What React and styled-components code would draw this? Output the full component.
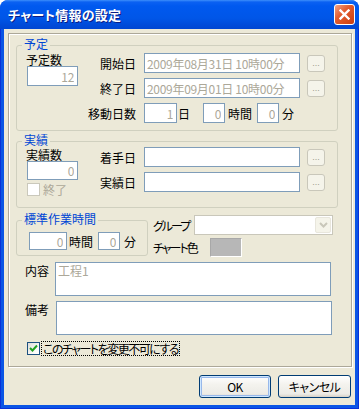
import React from "react";
import styled, { createGlobalStyle } from "styled-components";

const GlobalStyle = createGlobalStyle`
  html, body {
    margin: 0;
    padding: 0;
    background: #ffffff;
  }
  body {
    font-family: "Noto Sans CJK JP", "Noto Sans", sans-serif;
    font-size: 12px;
    font-feature-settings: "palt";
    color: #000;
  }
`;

const Window = styled.div`
  width: 359px;
  height: 409px;
  display: flex;
  flex-direction: column;
  border-radius: 8px 8px 0 0;
  overflow: hidden;
  background: #0a55e5;
`;

const TitleBar = styled.div`
  height: 29px;
  flex: none;
  display: flex;
  align-items: center;
  justify-content: space-between;
  padding: 0 4px 0 8px;
  box-sizing: border-box;
  background: linear-gradient(
    180deg,
    #3d8ffb 0px,
    #0b61f2 2px,
    #0059ef 6px,
    #0056e8 18px,
    #004bd9 25px,
    #0046d2 29px
  );
`;

const Title = styled.span`
  color: #fff;
  font-weight: bold;
  font-size: 13px;
  line-height: 14px;
  letter-spacing: 0.2px;
  text-shadow: 1px 1px 0 #0a1d86;
`;

const CloseButton = styled.div`
  width: 21px;
  height: 21px;
  box-sizing: border-box;
  border: 1px solid #fff;
  border-radius: 3px;
  background: linear-gradient(135deg, #f2a487 0%, #e35d30 40%, #d44a1c 75%, #c63e14 100%);
  display: flex;
  align-items: center;
  justify-content: center;
`;

const Frame = styled.div`
  flex: 1;
  display: flex;
  padding: 0 4px 4px;
  box-shadow: inset 1px 0 #0831d9, inset -1px 0 #0831d9, inset 0 -1px #0831d9;
`;

const Client = styled.div`
  flex: 1;
  background: #ece9d8;
  display: flex;
  flex-direction: column;
  padding: 4px 0 0 4px;
`;

const Panel = styled.div`
  width: 344px;
  height: 334px;
  box-sizing: border-box;
  border: 1px solid #aca899;
  box-shadow: inset 1px 1px 0 #fff, 1px 1px 0 #fff;
  padding: 11px 0 0 7px;
  display: flex;
  flex-direction: column;
`;

const Group = styled.div`
  position: relative;
  box-sizing: border-box;
  width: ${(p) => p.$w}px;
  height: ${(p) => p.$h}px;
  margin-top: ${(p) => p.$mt || 0}px;
  border: 1px solid #d0d0bf;
  border-radius: 3px;
  padding: ${(p) => p.$pad};
`;

const Legend = styled.span`
  position: absolute;
  top: -9px;
  left: 5px;
  padding: 0 2px;
  background: #ece9d8;
  color: #0046d5;
  line-height: 13px;
  white-space: nowrap;
`;

const FormGrid = styled.div`
  display: grid;
  grid-template-columns: 62px 48px auto;
  grid-template-rows: repeat(${(p) => p.$rows}, 20px);
  row-gap: 5px;
`;

const LeftCol = styled.div`
  grid-column: 1;
  grid-row: 1 / span ${(p) => p.$span};
  display: flex;
  flex-direction: column;
  align-items: flex-start;
  margin-top: ${(p) => p.$mt || 0}px;
`;

const Label = styled.span`
  line-height: 13px;
  white-space: nowrap;
  letter-spacing: ${(p) => p.$ls || 0}px;
  color: ${(p) => (p.$disabled ? "#aca899" : "#000")};
`;

const RowLabel = styled(Label)`
  grid-column: 2;
  align-self: center;
  text-align: right;
`;

const FieldRow = styled.div`
  grid-column: 3;
  display: flex;
  align-items: center;
  padding-left: 8px;
`;

const TextBox = styled.input`
  box-sizing: border-box;
  width: ${(p) => p.$w}px;
  height: ${(p) => p.$h || 20}px;
  margin: 0 0 0 ${(p) => p.$ml || 0}px;
  padding: 0 ${(p) => (p.$right ? 3 : 1)}px 0 ${(p) => (p.$right ? 1 : 2)}px;
  border: 1px solid #7f9db9;
  background: #fff;
  color: #aca899;
  font: inherit;
  font-size: 12px;
  letter-spacing: -0.3px;
  text-align: ${(p) => (p.$right ? "right" : "left")};
  outline: none;
`;

const Unit = styled.span`
  margin-left: ${(p) => p.$ml || 0}px;
  line-height: 13px;
  white-space: nowrap;
`;

const DotButton = styled.div`
  width: 18px;
  height: 17px;
  margin-left: 7px;
  box-sizing: border-box;
  border: 1px solid #c9c7ba;
  border-radius: 3px;
  background: #f5f4ea;
  color: #a09d8f;
  font-family: "Liberation Sans", sans-serif;
  font-size: 9px;
  line-height: 9px;
  display: flex;
  justify-content: center;
  align-items: flex-end;
  padding-bottom: 3px;
`;

const CheckRow = styled.div`
  display: flex;
  align-items: center;
  margin: ${(p) => p.$mt || 0}px 0 0 ${(p) => p.$ml || 0}px;
`;

const CheckBox = styled.div`
  width: 13px;
  height: 13px;
  box-sizing: border-box;
  border: 1px solid ${(p) => (p.$disabled ? "#cac8bb" : "#1c5180")};
  background: ${(p) =>
    p.$disabled ? "#fff" : "linear-gradient(135deg, #dcdcd7 0%, #fbfbf9 70%, #fff 100%)"};
  display: flex;
  align-items: center;
  justify-content: center;
`;

const CheckText = styled.span`
  margin-left: 1px;
  line-height: 13px;
  padding: 0 1px;
  white-space: nowrap;
  letter-spacing: ${(p) => p.$ls || 0}px;
  color: ${(p) => (p.$disabled ? "#aca899" : "#000")};
  border: 1px ${(p) => (p.$focus ? "dotted #000" : "solid transparent")};
`;

const BottomRow = styled.div`
  display: flex;
  margin-top: ${(p) => p.$mt}px;
`;

const SideCol = styled.div`
  display: flex;
  flex-direction: column;
  margin-left: 5px;
`;

const SideRow = styled.div`
  display: flex;
  align-items: center;
  margin-top: ${(p) => p.$mt || 0}px;
`;

const SideLabel = styled(Label)`
  width: ${(p) => p.$w}px;
`;

const Select = styled.div`
  width: 139px;
  height: 20px;
  box-sizing: border-box;
  border: 1px solid #c9c7ba;
  background: #fff;
  display: flex;
  justify-content: flex-end;
  padding: 1px;
`;

const SelectArrow = styled.div`
  width: 16px;
  height: 16px;
  box-sizing: border-box;
  border: 1px solid #e8e6dc;
  border-radius: 2px;
  background: #f5f4ea;
  display: flex;
  align-items: center;
  justify-content: center;
`;

const Swatch = styled.div`
  width: 32px;
  height: 19px;
  box-sizing: border-box;
  background: #b7b7b7;
  border: 1px solid;
  border-color: #a8a8a8 #fff #fff #a8a8a8;
`;

const MemoRow = styled.div`
  display: flex;
  align-items: flex-start;
  margin-top: ${(p) => p.$mt}px;
  padding-left: 9px;
`;

const MemoLabel = styled(Label)`
  width: ${(p) => p.$w}px;
  margin-top: 2px;
`;

const MemoBox = styled.textarea`
  box-sizing: border-box;
  width: 276px;
  height: 34px;
  margin: 0;
  padding: 1px 2px;
  border: 1px solid #7f9db9;
  background: #fff;
  color: #aca899;
  font: inherit;
  font-size: 12px;
  line-height: 14px;
  resize: none;
  overflow: hidden;
  outline: none;
`;

const ButtonRow = styled.div`
  display: flex;
  justify-content: flex-end;
  gap: 7px;
  padding-right: 4px;
  margin-top: 8px;
`;

const Button = styled.button`
  width: ${(p) => p.$w}px;
  height: 23px;
  box-sizing: border-box;
  margin: 0;
  padding: 0;
  border: 1px solid #003c74;
  border-radius: 3px;
  background: linear-gradient(180deg, #ffffff 0%, #f4f3ee 40%, #ecebe6 85%, #d6d0c5 100%);
  box-shadow: ${(p) =>
    p.$default ? "inset 0 0 0 1px #cee7ff, inset 0 0 0 2px #98b8ea" : "none"};
  font: inherit;
  font-size: 12px;
  letter-spacing: -0.5px;
  color: #000;
`;

const Check = () => (
  <svg width="9" height="9" viewBox="0 0 9 9">
    <path d="M1 4 L3.5 6.5 L8 1.5" fill="none" stroke="#21a121" strokeWidth="2" />
  </svg>
);

export default function App() {
  return (
    <>
      <GlobalStyle />
      <Window>
        <TitleBar>
          <Title>チャート情報の設定</Title>
          <CloseButton>
            <svg width="11" height="11" viewBox="0 0 11 11">
              <path d="M1.5 1.5 L9.5 9.5 M9.5 1.5 L1.5 9.5" stroke="#fff" strokeWidth="2.4" strokeLinecap="square" />
            </svg>
          </CloseButton>
        </TitleBar>
        <Frame>
          <Client>
            <Panel>
              <Group $w={322} $h={86} $pad="7px 0 0 9px">
                <Legend>予定</Legend>
                <FormGrid $rows={3}>
                  <LeftCol $span={3}>
                    <Label>予定数</Label>
                    <TextBox $w={51} $ml={1} $right readOnly value="12" />
                  </LeftCol>
                  <RowLabel>開始日</RowLabel>
                  <FieldRow>
                    <TextBox $w={156} readOnly value="2009年08月31日 10時00分" />
                    <DotButton>...</DotButton>
                  </FieldRow>
                  <RowLabel>終了日</RowLabel>
                  <FieldRow>
                    <TextBox $w={156} readOnly value="2009年09月01日 10時00分" />
                    <DotButton>...</DotButton>
                  </FieldRow>
                  <RowLabel>移動日数</RowLabel>
                  <FieldRow>
                    <TextBox $w={33} $right readOnly value="1" />
                    <Unit $ml={1}>日</Unit>
                    <TextBox $w={22} $ml={13} $right readOnly value="0" />
                    <Unit $ml={3}>時間</Unit>
                    <TextBox $w={22} $ml={5} $right readOnly value="0" />
                    <Unit $ml={3}>分</Unit>
                  </FieldRow>
                </FormGrid>
              </Group>

              <Group $w={322} $h={67} $mt={10} $pad="5px 0 0 9px">
                <Legend>実績</Legend>
                <FormGrid $rows={2}>
                  <LeftCol $span={2} $mt={1}>
                    <Label>実績数</Label>
                    <TextBox $w={51} $ml={1} $right readOnly value="0" />
                    <CheckRow $mt={2} $ml={1}>
                      <CheckBox $disabled />
                      <CheckText $disabled>終了</CheckText>
                    </CheckRow>
                  </LeftCol>
                  <RowLabel>着手日</RowLabel>
                  <FieldRow>
                    <TextBox $w={156} readOnly value="" />
                    <DotButton>...</DotButton>
                  </FieldRow>
                  <RowLabel>実績日</RowLabel>
                  <FieldRow>
                    <TextBox $w={156} readOnly value="" />
                    <DotButton>...</DotButton>
                  </FieldRow>
                </FormGrid>
              </Group>

              <BottomRow $mt={7}>
                <Group $w={132} $h={36} $mt={5} $pad="11px 0 0 12px">
                  <Legend>標準作業時間</Legend>
                  <CheckRow>
                    <TextBox $w={38} $h={18} $right readOnly value="0" />
                    <Unit $ml={2}>時間</Unit>
                    <TextBox $w={22} $h={18} $ml={5} $right readOnly value="0" />
                    <Unit $ml={4}>分</Unit>
                  </CheckRow>
                </Group>
                <SideCol>
                  <SideRow>
                    <SideLabel $w={41} $ls={-2}>グループ</SideLabel>
                    <Select>
                      <SelectArrow>
                        <svg width="9" height="6" viewBox="0 0 9 6">
                          <path d="M1 1 L4.5 4.5 L8 1" fill="none" stroke="#c9c7ba" strokeWidth="2" />
                        </svg>
                      </SelectArrow>
                    </Select>
                  </SideRow>
                  <SideRow $mt={3}>
                    <SideLabel $w={57} $ls={-2}>チャート色</SideLabel>
                    <Swatch />
                  </SideRow>
                </SideCol>
              </BottomRow>

              <MemoRow $mt={5}>
                <MemoLabel $w={30}>内容</MemoLabel>
                <MemoBox readOnly value="工程1" />
              </MemoRow>
              <MemoRow $mt={5}>
                <MemoLabel $w={31}>備考</MemoLabel>
                <MemoBox readOnly value="" />
              </MemoRow>

              <CheckRow $mt={6} $ml={11}>
                <CheckBox>
                  <Check />
                </CheckBox>
                <CheckText $focus $ls={-1.5}>このチャートを変更不可にする</CheckText>
              </CheckRow>
            </Panel>
            <ButtonRow>
              <Button $w={72} $default>OK</Button>
              <Button $w={73}>キャンセル</Button>
            </ButtonRow>
          </Client>
        </Frame>
      </Window>
    </>
  );
}
